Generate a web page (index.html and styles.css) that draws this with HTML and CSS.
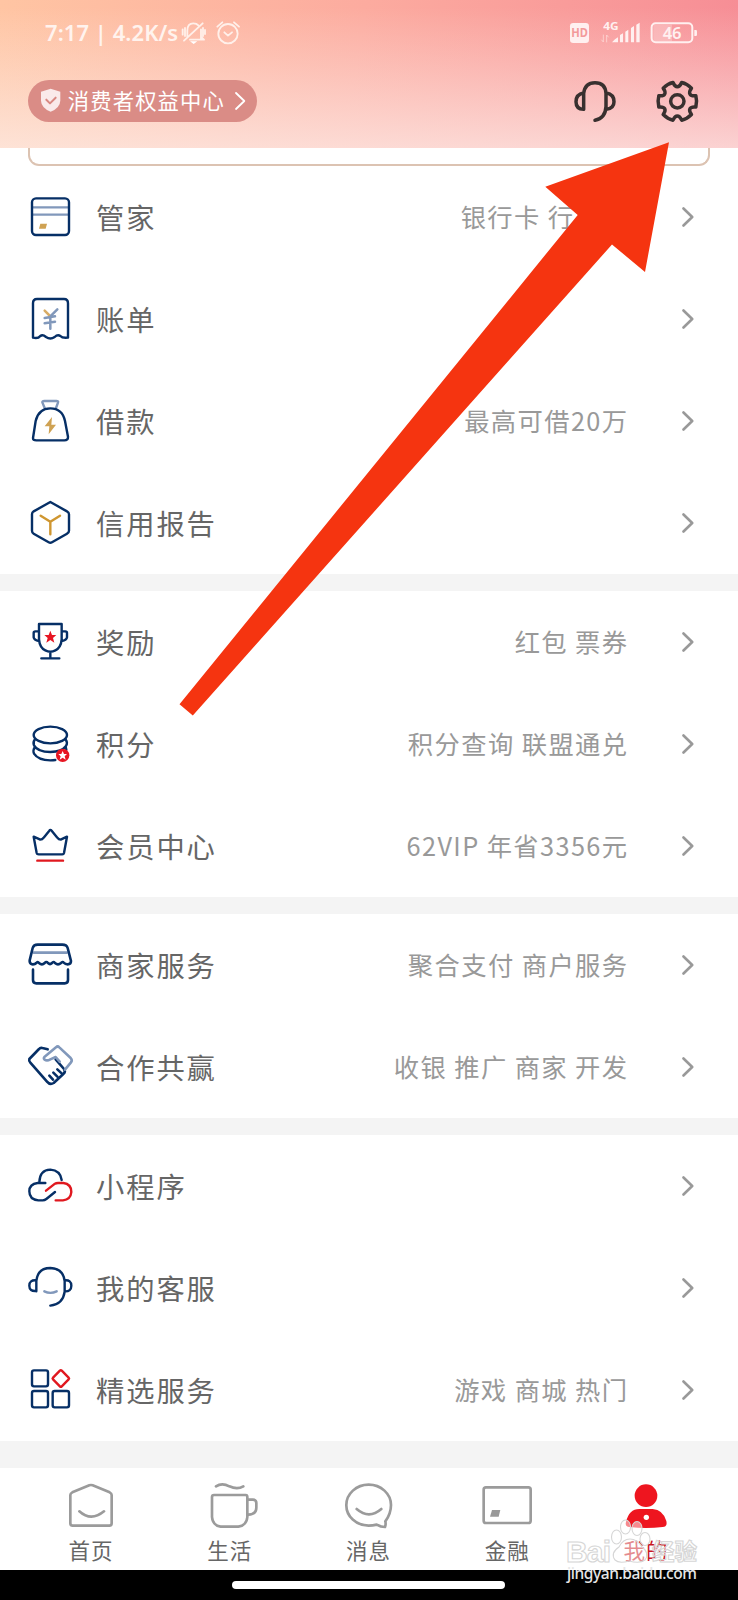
FILE: index.html
```html
<!DOCTYPE html>
<html lang="zh-CN">
<head>
<meta charset="utf-8">
<title>我的</title>
<link rel="stylesheet" href="styles.css">
</head>
<body>
<div class="screen">
  <header class="header">
    <div class="status">
      <span class="clock">7:17 | 4.2K/s</span>
      <svg class="status-left" viewBox="540 60 186 75">
        <g class="line white">
          <path d="M552 122L608 70M562 112V92Q562 70 580 70Q590 70 595 76M603 88V116M570 119H612L603 110M548 88V104M555 84V108M609 84V108M615 90V102"/>
          <circle cx="684" cy="101" r="29"/>
          <path d="M652 80L667 67M717 80L702 67M673 97L684 107L696 97"/>
        </g>
        <path class="fill-white" d="M570 124H592L581 132Z"/>
      </svg>
      <svg class="status-right" viewBox="600 60 400 75">
        <rect class="fill-white" x="606" y="69" width="57" height="60" rx="10"/>
        <text class="hd" x="610" y="112" textLength="50" lengthAdjust="spacingAndGlyphs">HD</text>
        <text class="net" x="706" y="89" textLength="46" lengthAdjust="spacingAndGlyphs">4G</text>
        <path class="line faint" d="M706 105V126L701 120M716 126V105L721 111"/>
        <path class="fill-white" d="M732 127Q741 116 750 112V127ZM756 105L765 100V127H756ZM772 95L781 89V127H772ZM789 84L798 78V127H789ZM805 74L815 68V127H805Z"/>
        <rect class="charge" x="856" y="74" width="56" height="50"/>
        <rect class="battery" x="851" y="70" width="122" height="57" rx="12"/>
        <path class="fill-white" d="M979 90H984Q987 90 987 94V104Q987 108 984 108H979Z"/>
        <text class="level" x="884" y="116" textLength="57" lengthAdjust="spacingAndGlyphs">46</text>
      </svg>
    </div>
    <div class="actions">
      <div class="pill">
        <svg class="shield" viewBox="120 266 64 74"><path class="badge" d="M152 268L181 277V304Q180 326 152 337Q124 326 123 304V277Z"/><path class="check" d="M139 301L150 312L167 295"/></svg>
        <span class="pill-text">消费者权益中心</span>
        <svg class="pill-arrow" viewBox="700 270 45 64"><path class="line white-thin" d="M709 279L734 303L709 327"/></svg>
      </div>
      <div class="tools">
        <svg class="icon dark" viewBox="605 225 150 150"><path d="M646 325V277Q650 245 680 245Q711 245 713 277V317Q711 352 680 358M646 276Q623 280 623 302Q623 324 646 325M714 276Q737 280 737 302Q737 322 714 325"/></svg>
        <svg class="icon dark" viewBox="-76 -76 150 150"><circle r="20"/><path d="M55.5 17C37 15 31.5 24.600 42.400 39.600Q29 53 13 56.500C5.600 39.600 -5.600 39.600 -13 56.500Q-29 53 -42.400 39.600C-31.500 24.600 -37 15 -55.500 17Q-60 0 -55.500 -17C-37 -15 -31.500 -24.600 -42.400 -39.600Q-29 -53 -13 -56.500C-5.600 -39.600 5.600 -39.600 13 -56.500Q29 -53 42.400 -39.600C31.500 -24.600 37 -15 55.500 -17Q60 0 55.500 17Z"/></svg>
      </div>
    </div>
  </header>

  <main class="list">
    <div class="card-edge"></div>
    <section class="group">
      <div class="row">
        <svg class="icon navy" viewBox="75 36 150 150"><path class="slate" d="M98 82H206M98 104H206"/><rect x="96" y="55" width="111" height="110" rx="12"/><path class="gold-fill" d="M121 131H141L137 146H117Z"/></svg>
        <span class="label">管家</span><span class="note covered">银行卡 行</span>
        <svg class="chevron" viewBox="0 0 12 20"><path d="M1.500 1.500L10.200 10L1.500 18.500"/></svg>
      </div>
      <div class="row">
        <svg class="icon navy" viewBox="75 342 150 150"><path d="M99 473V370Q99 357 111 357H192Q204 357 204 370V473Q187 475 181 468Q173 462 164 471Q151 480 138 471Q128 462 121 468Q114 477 99 473Z"/><path class="gold" d="M134 392L150 408"/><path class="slate yen" d="M172 388L151 409V446M134 414L165 409M134 430L165 425"/></svg>
        <span class="label">账单</span><span class="note"></span>
        <svg class="chevron" viewBox="0 0 12 20"><path d="M1.500 1.500L10.200 10L1.500 18.500"/></svg>
      </div>
      <div class="row">
        <svg class="icon navy" viewBox="75 648 150 150"><path class="slate" d="M134 684L127 667Q127 663 133 663H169Q176 663 174 668L168 684"/><path d="M99 774L107 723Q116 685 151 685Q187 685 195 723L204 770Q205 781 193 781H109Q98 781 99 774Z"/><path class="gold-fill" d="M156 711L134 739H148L146 763L168 734H154Z"/></svg>
        <span class="label">借款</span><span class="note">最高可借20万</span>
        <svg class="chevron" viewBox="0 0 12 20"><path d="M1.500 1.500L10.200 10L1.500 18.500"/></svg>
      </div>
      <div class="row">
        <svg class="icon navy" viewBox="75 954 150 150"><path d="M151 966L201 994Q207 997 207 1003V1052Q207 1058 201 1061L156 1087Q151 1090 146 1087L101 1061Q96 1058 96 1052V1003Q96 997 101 994Z"/><path class="amber" d="M122 1007L151 1025L180 1007M151 1025V1063"/></svg>
        <span class="label">信用报告</span><span class="note"></span>
        <svg class="chevron" viewBox="0 0 12 20"><path d="M1.500 1.500L10.200 10L1.500 18.500"/></svg>
      </div>
    </section>

    <section class="group">
      <div class="row">
        <svg class="icon navy" viewBox="75 51 150 150"><path d="M117 72H185V118Q183 143 166 151Q151 159 136 151Q119 143 117 118ZM117 94H106Q101 94 101 99V112Q102 120 117 123M185 94H196Q201 94 201 99V112Q200 120 185 123M151 155V174M124 175H178"/><path class="red-fill" d="M151 92L156 105L169 105L159 114L163 128L151 120L139 128L143 114L133 105L146 105Z"/></svg>
        <span class="label">奖励</span><span class="note">红包 票券</span>
        <svg class="chevron" viewBox="0 0 12 20"><path d="M1.500 1.500L10.200 10L1.500 18.500"/></svg>
      </div>
      <div class="row">
        <svg class="icon navy" viewBox="75 357 150 150"><ellipse cx="151" cy="405" rx="50" ry="25"/><path d="M105 418Q98 427 102 436Q113 456 151 456Q186 455 198 438Q204 428 197 418M104 442Q98 451 102 461Q115 481 151 481Q160 481 166 480M197 440L199 449"/><circle class="red-fill" cx="188" cy="466" r="20"/><path class="fill-white" d="M188 453L192 462H201L194 469L197 479L188 473L179 479L182 469L175 462H184Z"/></svg>
        <span class="label">积分</span><span class="note">积分查询 联盟通兑</span>
        <svg class="chevron" viewBox="0 0 12 20"><path d="M1.500 1.500L10.200 10L1.500 18.500"/></svg>
      </div>
      <div class="row">
        <svg class="icon navy" viewBox="75 663 150 150"><path d="M101 710L121 719Q127 719 131 713L148 692Q151 687 155 692L172 713Q176 719 182 719L201 710L192 759Q191 763 187 763H116Q111 763 110 759Z"/><path class="red" d="M112 782H189"/></svg>
        <span class="label">会员中心</span><span class="note">62VIP 年省3356元</span>
        <svg class="chevron" viewBox="0 0 12 20"><path d="M1.500 1.500L10.200 10L1.500 18.500"/></svg>
      </div>
    </section>

    <section class="group">
      <div class="row">
        <svg class="icon navy bold" viewBox="75 60 150 150"><path class="slate" d="M101 98H200"/><path d="M113 74H187Q200 74 203 84L213 123Q213 133 203 133Q196 133 191 128Q188 124 183 129Q174 137 165 129Q160 123 156 129Q150 135 144 129Q139 123 134 129Q126 137 117 129Q113 123 109 129Q104 134 96 133Q88 130 89 121L98 84Q101 74 113 74ZM99 149V180Q99 190 109 190H194Q204 190 204 180V149"/></svg>
        <span class="label">商家服务</span><span class="note">聚合支付 商户服务</span>
        <svg class="chevron" viewBox="0 0 12 20"><path d="M1.500 1.500L10.200 10L1.500 18.500"/></svg>
      </div>
      <div class="row">
        <svg class="icon navy bold" viewBox="75 366 150 150"><path d="M143 388L127 384Q121 382 117 387L88 417Q86 423 91 428L141 485Q150 496 161 489L190 462Q198 455 192 447L167 418M148 467L159 479M160 458L172 470M172 448L185 460"/><path class="slate" d="M134 410L168 382Q173 377 178 382L212 414Q218 421 213 427L195 449M134 410Q129 415 134 419Q141 424 151 418L167 411L179 425"/></svg>
        <span class="label">合作共赢</span><span class="note">收银 推广 商家 开发</span>
        <svg class="chevron" viewBox="0 0 12 20"><path d="M1.500 1.500L10.200 10L1.500 18.500"/></svg>
      </div>
    </section>

    <section class="group">
      <div class="row">
        <svg class="icon navy" viewBox="75 33 150 150"><path d="M136 99H113Q88 102 88 124Q88 149 115 151H128Q134 151 139 147L165 126M118 97Q119 60 151 59Q181 61 185 90"/><path class="red" d="M138 122L165 101Q168 99 174 99H190Q214 102 214 126Q212 149 189 151H167"/></svg>
        <span class="label">小程序</span><span class="note"></span>
        <svg class="chevron" viewBox="0 0 12 20"><path d="M1.500 1.500L10.200 10L1.500 18.500"/></svg>
      </div>
      <div class="row">
        <svg class="icon navy" viewBox="75 339 150 150"><path d="M109 424V393Q113 354 151 354Q190 356 194 393V425Q189 463 151 467M109 391Q88 389 88 407Q88 425 109 423M194 391Q214 389 214 407Q214 425 194 424"/><path class="slate" d="M133 424Q151 433 170 424"/></svg>
        <span class="label">我的客服</span><span class="note"></span>
        <svg class="chevron" viewBox="0 0 12 20"><path d="M1.500 1.500L10.200 10L1.500 18.500"/></svg>
      </div>
      <div class="row">
        <svg class="icon navy" viewBox="75 645 150 150"><rect x="96" y="661" width="48" height="48" rx="6"/><rect x="96" y="723" width="48" height="49" rx="6"/><rect x="158" y="723" width="49" height="49" rx="6"/><rect class="red" x="164" y="667" width="37" height="37" rx="4" transform="rotate(45 182.500 685.500)"/></svg>
        <span class="label">精选服务</span><span class="note">游戏 商城 热门</span>
        <svg class="chevron" viewBox="0 0 12 20"><path d="M1.500 1.500L10.200 10L1.500 18.500"/></svg>
      </div>
    </section>
  </main>

  <nav class="tabs">
    <div class="tab"><svg class="tab-icon" viewBox="183 120 180 150"><path d="M217 157L268 136Q273 134 278 136L329 157Q335 160 335 165V250Q335 257 328 257H218Q211 257 211 250V165Q211 160 217 157ZM238 214Q273 246 312 214"/></svg><span>首页</span></div>
    <div class="tab"><svg class="tab-icon" viewBox="598 120 180 150"><path d="M646 139Q664 127 686 139Q710 150 728 139M640 165H735Q740 165 740 171V231Q738 256 713 260H660Q636 256 634 231V171Q634 165 640 165ZM743 179H757Q767 179 767 189V203Q767 223 743 224"/></svg><span>生活</span></div>
    <div class="tab"><svg class="tab-icon" viewBox="1014 120 180 150"><path d="M1156 244Q1173 221 1173 195A67 61 0 0 0 1106 134A67 61 0 0 0 1039 195A67 61 0 0 0 1106 257Q1118 257 1130 254Q1142 261 1155 261Q1158 253 1156 244M1070 207Q1107 239 1144 207"/></svg><span>消息</span></div>
    <div class="tab"><svg class="tab-icon" viewBox="328 120 180 150"><rect x="348" y="142" width="141" height="107" rx="7"/><path class="grey-fill" d="M373 210H398L393 230H367Z"/></svg><span>金融</span></div>
    <div class="tab active"><svg class="tab-icon" viewBox="745 120 180 150"><path class="red-fill" d="M775 246Q784 207 815 207H855Q886 209 896 243Q900 260 885 261Q835 267 785 261Q771 260 775 246Z"/><circle class="red-fill" cx="835" cy="167" r="34"/><circle class="fill-white" cx="836" cy="232" r="8"/></svg><span>我的</span></div>
  </nav>
  <footer class="home-bar"><div class="handle"></div></footer>

  <svg class="overlay" viewBox="0 0 738 1600">
    <path class="arrow" d="M669 142.300L645 272L612 244.500L192.800 715.500L179.500 704.300L577.700 215L545.300 186.700Z"/>
    <g class="mark">
      <text class="mark-name" x="566" y="1561.500" textLength="45">Bai</text>
      <ellipse cx="616.500" cy="1537" rx="5" ry="7"/><ellipse cx="625.500" cy="1527" rx="5" ry="7"/><ellipse cx="637" cy="1528.500" rx="5" ry="7"/><ellipse cx="645" cy="1539" rx="5" ry="6.500"/>
      <path d="M630 1539Q623 1539 619 1547Q610 1553 615 1560Q619 1564 629 1561Q640 1564 645 1560Q650 1553 642 1547Q637 1539 630 1539Z"/>
      <text class="mark-cn" x="652" y="1560" textLength="45">经验</text>
    </g>
    <text class="mark-url" x="567" y="1579" textLength="130">jingyan.baidu.com</text>
  </svg>
</div>
</body>
</html>
```
FILE: styles.css
```css
body { margin: 0; }
svg { display: block; flex: none; }
.screen {
  position: relative;
  width: 738px;
  height: 1600px;
  display: flex;
  flex-direction: column;
  background: #f4f4f4;
  overflow: hidden;
  font-family: "Noto Sans CJK SC", sans-serif;
}
.header {
  height: 148px;
  flex: none;
  background:
    linear-gradient(180deg, rgba(255,245,240,0) 5%, rgba(253,240,236,.7) 100%),
    linear-gradient(100deg, #ffc5a3 0%, #fcab9f 48%, #f68c95 100%);
}
.status {
  height: 66px;
  box-sizing: border-box;
  padding: 20px 37px 0 45px;
  display: flex;
  align-items: flex-start;
}
.clock {
  width: 135px;
  font: 600 22px/25px "Noto Sans", sans-serif;
  letter-spacing: 0.05px;
  color: #fff3ee;
  white-space: nowrap;
}
.status-left { width: 62px; height: 25px; }
.status-right { width: 133.300px; height: 25px; margin-left: auto; }
.line { fill: none; stroke-linecap: round; stroke-linejoin: round; }
.white { stroke: #fff0ea; stroke-width: 5.500; }
.white-thin { stroke: #fff; stroke-width: 5.500; }
.faint { stroke: #fde0dc; stroke-width: 3; opacity: .7; }
.status-right .fill-white { fill: #fff0f0; }
.hd { font: 700 36px "Noto Sans", sans-serif; fill: #f39a9b; }
.net { font: 700 33px "Noto Sans", sans-serif; fill: #fff0f0; }
.level { font: 600 48px "Noto Sans", sans-serif; fill: #fff0f0; }
.battery { fill: none; stroke: #fff0f0; stroke-width: 6; }
.charge { fill: #fff; opacity: .25; }
.actions {
  display: flex;
  justify-content: space-between;
  align-items: center;
  padding: 0 36px 0 28px;
  height: 69px;
}
.pill {
  box-sizing: border-box;
  width: 229px;
  height: 42px;
  border-radius: 21px;
  background: #da8c86;
  display: flex;
  align-items: center;
  padding-left: 12px;
  color: #fff;
  font-size: 21.300px;
  letter-spacing: 1.150px;
  white-space: nowrap;
}
.pill-text { padding-bottom: 2px; }
.shield { width: 21.300px; height: 24.700px; margin-right: 6.500px; }
.badge { fill: #faeaea; }
.check { fill: none; stroke: #d98983; stroke-width: 6; stroke-linecap: round; stroke-linejoin: round; }
.pill-arrow { width: 15px; height: 21.300px; margin-left: 8px; }
.tools { display: flex; gap: 32.500px; }
.icon { width: 50px; height: 50px; fill: none; stroke-linecap: round; stroke-linejoin: round; }
.dark { stroke: #38302f; stroke-width: 10.500; }
.list { display: flex; flex-direction: column; flex: none; }
.card-edge {
  height: 18px;
  box-sizing: border-box;
  padding: 0 28px;
  background: #fff;
}
.card-edge::after {
  content: "";
  display: block;
  height: 18px;
  box-sizing: border-box;
  border: 2px solid #dcc3b2;
  border-top: 0;
  border-radius: 0 0 11px 11px;
}
.group { background: #fff; margin-bottom: 17px; }
.row {
  height: 102px;
  box-sizing: border-box;
  padding: 0 44px 1px 25px;
  display: flex;
  align-items: center;
}
.navy { stroke: #062f66; stroke-width: 7.200; }
.bold { stroke-width: 7.800; }
.slate { stroke: #8198bb; }
.yen { stroke-width: 7.500; }
.gold { stroke: #d8ac65; stroke-width: 7.500; }
.amber { stroke: #cf9630; }
.gold-fill { fill: #cfa253; stroke: none; }
.red { stroke: #e0181f; }
.red-fill { fill: #e71623; stroke: none; }
.fill-white { fill: #fff; stroke: none; }
.label {
  margin-left: 21px;
  font-size: 28.300px;
  line-height: 40px;
  letter-spacing: 1.900px;
  color: #666;
  white-space: nowrap;
}
.note {
  margin-left: auto;
  margin-right: 53.500px;
  padding-bottom: 1px;
  font-size: 25.300px;
  line-height: 40px;
  letter-spacing: 1.400px;
  color: #999;
  white-space: nowrap;
}
.covered { margin-right: 107.500px; }
.chevron { width: 12px; height: 20px; fill: none; stroke: #999; stroke-width: 2.600; stroke-linecap: round; stroke-linejoin: round; }
.tabs {
  height: 102px;
  flex: none;
  box-sizing: border-box;
  margin-top: 10px;
  padding: 12px 22.500px 0 21.500px;
  background: #fff;
  display: grid;
  grid-template-columns: repeat(5, 1fr);
}
.tab {
  display: flex;
  flex-direction: column;
  align-items: center;
  font-size: 21.500px;
  line-height: 40px;
  letter-spacing: 1px;
  color: #666;
}
.tab-icon { width: 60px; height: 50px; fill: none; stroke: #9b9b9b; stroke-width: 8; stroke-linecap: round; stroke-linejoin: round; }
.grey-fill { fill: #999; stroke: none; }
.tab-icon .red-fill { fill: #ee151f; }
.active { color: #c8171e; }
.home-bar { flex: 1; background: #000; display: flex; justify-content: center; }
.handle { width: 273px; height: 8px; margin-top: 11px; margin-right: 1px; border-radius: 4px; background: #fff; }
.overlay { position: absolute; left: 0; top: 0; width: 738px; height: 1600px; }
.arrow { fill: #f53410; }
.mark { fill: rgba(255,255,255,.5); stroke: #d6d6d6; stroke-width: 1.100; }
.mark-name { font: 700 30px "Liberation Sans", sans-serif; }
.mark-cn { font: 700 22.500px "Noto Sans CJK SC", sans-serif; }
.mark-url { font: 500 15.500px "Noto Sans", sans-serif; fill: #e6e6e6; }
```
